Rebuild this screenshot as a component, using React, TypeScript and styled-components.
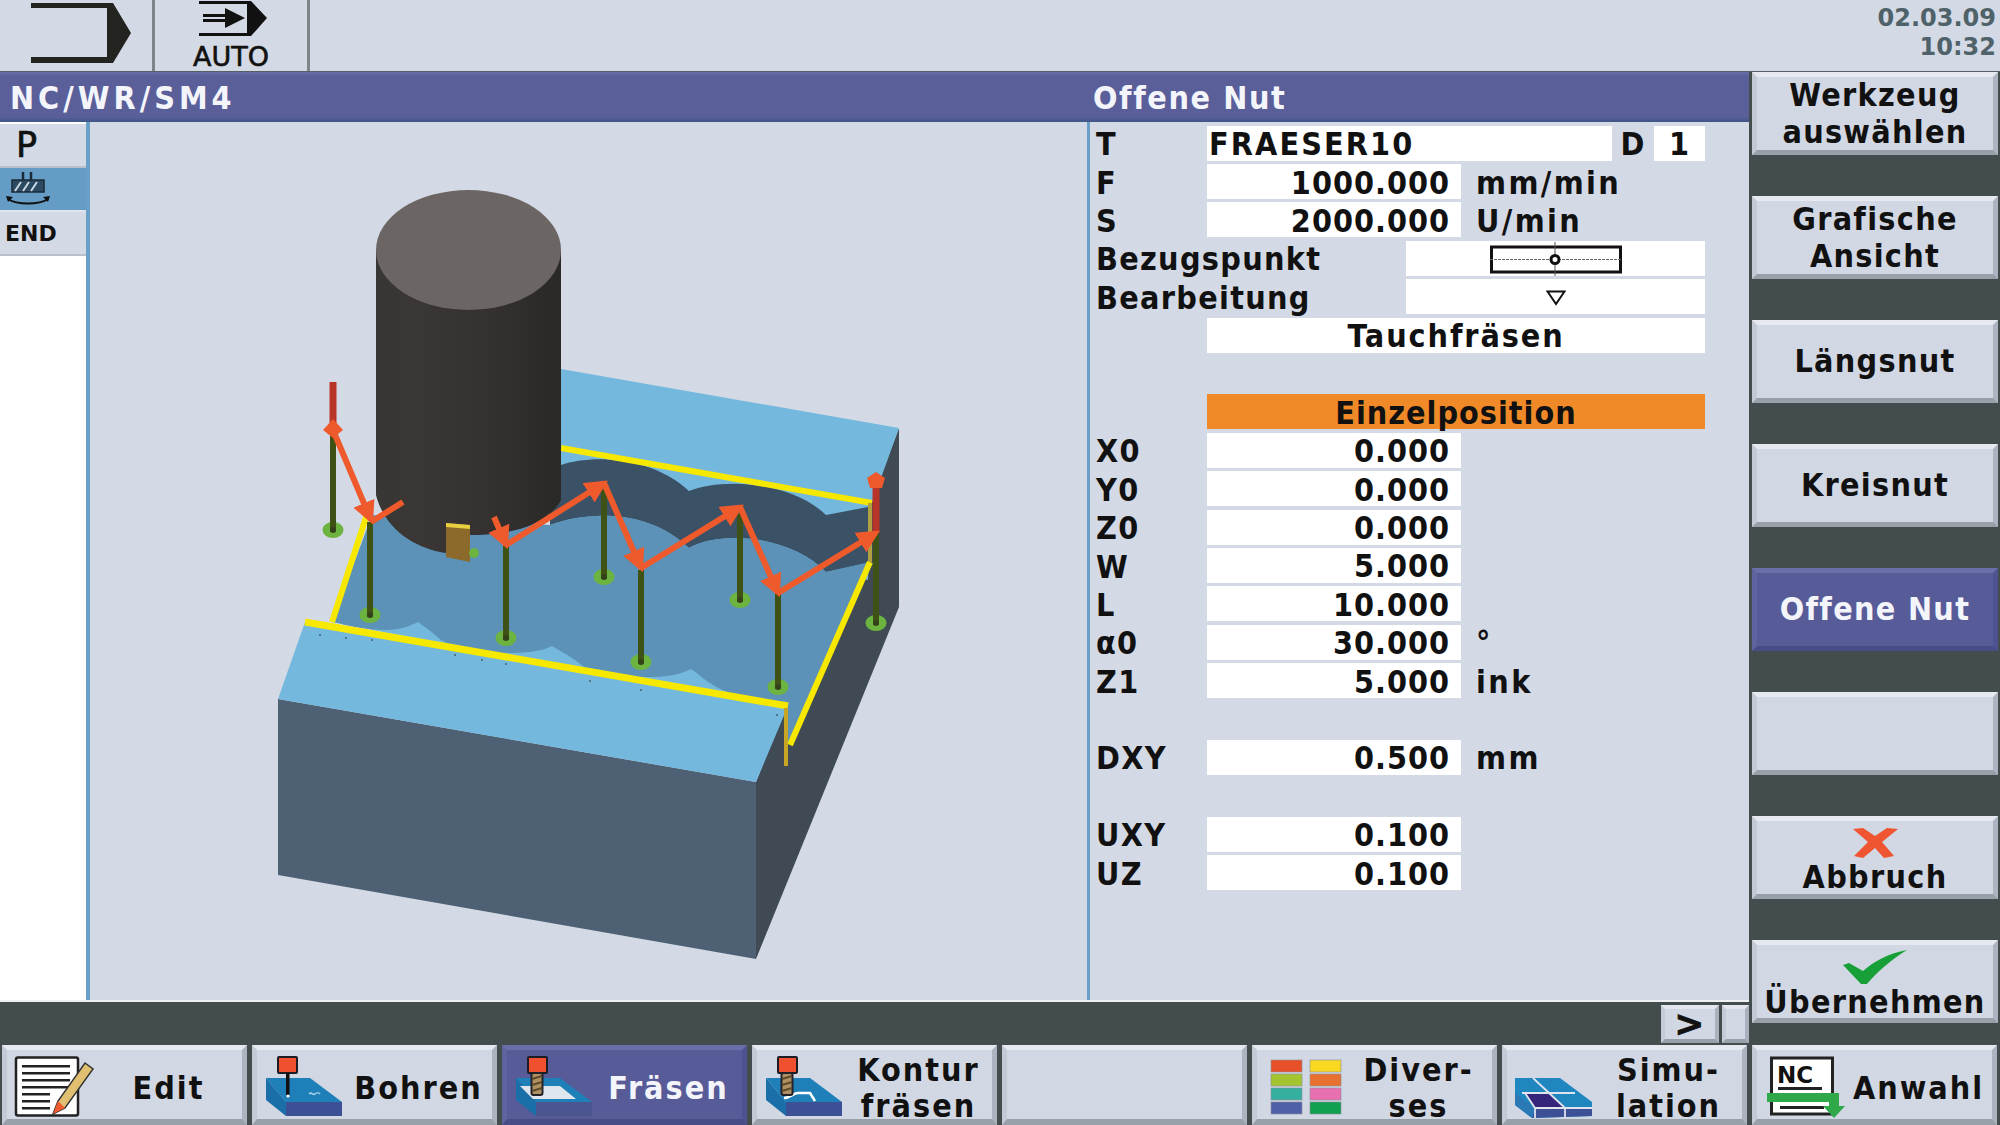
import React from "react";
import styled, { createGlobalStyle } from "styled-components";

const Global = createGlobalStyle`
  html, body { margin: 0; padding: 0; background: #d4dae5; }
  * { box-sizing: border-box; }
`;

const FONT = `"DejaVu Sans Condensed", "DejaVu Sans", "Liberation Sans", sans-serif`;
const WIDE = `"DejaVu Sans", "Liberation Sans", sans-serif`;
const DARK = "#434d4d";
const PANEL = "#d4dae5";

const Screen = styled.div`
  width: 2000px; height: 1125px; overflow: hidden;
  display: flex; flex-direction: column;
  background: ${PANEL}; color: #111;
  font-family: ${FONT}; font-weight: 700; font-size: 32px; letter-spacing: 1.3px;
`;
const TopBar = styled.header`
  height: 72px; flex: none; display: flex;
  border-bottom: 1px solid #565f63; background: ${PANEL};
`;
const TopCell = styled.div<{ $w: number }>`
  width: ${p => p.$w}px; border-right: 3px solid #7f868b;
  display: flex; flex-direction: column; align-items: center;
`;
const AutoLabel = styled.span`
  font-family: ${WIDE}; letter-spacing: 0; font-size: 27px; line-height: 26px; font-weight: 400; -webkit-text-stroke: 0.6px #111;
`;
const Clock = styled.div`
  margin-left: auto; padding: 4px 4px 0 0; text-align: right;
  font-family: ${WIDE}; letter-spacing: 0;
  color: #4f6269; font-size: 24px; line-height: 29px;
`;
const Middle = styled.div`
  flex: 1; display: flex; min-height: 0; background: ${DARK};
`;
const WorkColumn = styled.div`
  width: 1749px; display: flex; flex-direction: column;
`;
const TitleBar = styled.div`
  height: 50px; flex: none; display: flex; align-items: center; padding-top: 2px;
  color: #f4f5fa;
  background: linear-gradient(#6a6fa9 0, #5a5f9a 8%, #5a5f9a 90%, #3d5585 100%);
`;
const TitleLeft = styled.div`
  width: 1087px; padding-left: 10px; letter-spacing: 4px;
`;
const TitleRight = styled.div`
  padding-left: 6px; letter-spacing: 1.6px;
`;
const Content = styled.div`
  flex: 1; display: flex; min-height: 0; background: ${PANEL};
  border-bottom: 2px solid #eef0f4;
`;
const ProgramList = styled.nav`
  width: 90px; flex: none; background: #fff;
  border-right: 4px solid #6a9fc8; padding-top: 2px;
  display: flex; flex-direction: column;
`;
const ProgramRow = styled.div<{ $selected?: boolean; $small?: boolean }>`
  height: 44px; display: flex; align-items: center; padding-left: ${p => (p.$small ? 5 : 16)}px;
  background: ${p => (p.$selected ? "#659cc6" : PANEL)};
  border-bottom: 2px solid ${p => (p.$selected ? "#dfe4ec" : "#b9c0cb")};
  font-family: ${WIDE}; letter-spacing: 0;
  font-size: ${p => (p.$small ? 22 : 35)}px;
  font-weight: ${p => (p.$small ? 700 : 400)};
  ${p => (p.$small ? "" : "-webkit-text-stroke: 0.7px #111;")}
`;
const Graphic = styled.div`
  flex: 1; min-width: 0;
  svg { display: block; width: 997px; height: 876px; }
`;
const Form = styled.section`
  width: 662px; flex: none; border-left: 3px solid #6a9fc8;
  padding: 2px 44px 0 6px;
`;
const Row = styled.div`
  height: 38.4px; display: flex; align-items: center; white-space: nowrap;
`;
const FieldLabel = styled.span`
  width: 111px; flex: none; padding-top: 2px;
`;
const WideLabel = styled.span`
  padding-top: 2px;
`;
const Field = styled.div<{ $w?: number; $align?: string; $bg?: string; $push?: boolean; $ls?: number }>`
  height: 35px; display: flex; align-items: center;
  ${p => (p.$w ? `width:${p.$w}px;flex:none;` : "flex:1;")}
  ${p => (p.$push ? "margin-left:auto;" : "")}
  justify-content: ${p => p.$align || "flex-end"};
  background: ${p => p.$bg || "#fff"};
  letter-spacing: ${p => p.$ls ?? 1}px;
  padding: ${p => (!p.$align ? "2px 11px 0 3px" : "2px 2px 0")};
`;
const Unit = styled.span`
  margin-left: 15px; padding-top: 2px; letter-spacing: 2.4px;
`;
const DLabel = styled.span`
  width: 42px; flex: none; text-align: center; padding-top: 2px;
`;
const HintBar = styled.div`
  height: 43px; flex: none; display: flex; justify-content: flex-end;
  align-items: flex-start; gap: 3px; padding: 3px 0 0 0; background: ${DARK};
`;
const MiniKey = styled.div<{ $w: number }>`
  width: ${p => p.$w}px; height: 38px; display: flex; align-items: center; justify-content: center;
  background: #d1d7e3;
  border-style: solid; border-width: 4px;
  border-color: #e4e7ee #aab1bc #98a0aa #c6ccd7;
  font-family: ${WIDE}; font-size: 36px; line-height: 1; -webkit-text-stroke: 0.8px #111;
`;
const SideKeys = styled.aside`
  flex: 1; display: flex; flex-direction: column; gap: 41px;
  padding: 0 2px 0 3px;
`;
const SoftKey = styled.button<{ $active?: boolean }>`
  height: 83px; flex: none; width: 100%; padding: 0; margin: 0;
  font: inherit; letter-spacing: inherit; text-align: center;
  display: flex; flex-direction: column; align-items: center; justify-content: center;
  border-style: solid; border-width: 5px;
  color: ${p => (p.$active ? "#f4f5fa" : "#111")};
  background: ${p => (p.$active ? "#575c98" : "#d1d7e3")};
  border-color: ${p => (p.$active
    ? "#6a6fa9 #4d5290 #484d88 #5f64a0"
    : "#e6e9ef #adb4bf #98a0aa #c4cad5")};
`;
const SideIcon = styled.svg`
  display: block; flex: none; margin-top: 7px;
`;
const KeyText = styled.span`
  line-height: 37px; display: block; white-space: nowrap;
`;
const BottomRow = styled.footer`
  height: 80px; flex: none; display: flex; gap: 5px; padding-left: 2px; background: ${DARK};
`;
const BottomKey = styled(SoftKey)`
  width: 245px; height: 80px; flex-direction: row; justify-content: flex-start;
  padding: 5px 0 0 6px; border-bottom-width: 6px; letter-spacing: 2px;
`;
const BottomIcon = styled.svg`
  display: block; width: 82px; height: 62px; flex: none;
`;
const BottomLabel = styled.span`
  flex: 1; text-align: center; white-space: nowrap; line-height: 36px; padding-top: 1px;
`;

const Back = ({ children }: { children: React.ReactNode }) => (
  <BottomIcon viewBox="0 0 82 62">{children}</BottomIcon>
);

const IconEdit = () => (
  <Back>
    <rect x="3" y="1.5" width="62" height="58" rx="2" fill="#fff" stroke="#222" strokeWidth="2.5" />
    {[9, 16, 23, 30, 37, 44, 51].map(y => (
      <rect key={y} x="9" y={y} width={y > 36 ? 28 : 48} height="2.5" fill="#222" />
    ))}
    <polygon points="72,7 80,13 52,52 40,58 45,45" fill="#e0c070" stroke="#333" strokeWidth="1.5" />
    <polygon points="45,45 52,52 40,58" fill="#ef5a2e" />
  </Back>
);
const Tool = ({ tan }: { tan?: boolean }) => (
  <g>
    <rect x="15" y="1" width="19" height="16" rx="1" fill="#ef5030" stroke="#1c1c24" strokeWidth="2" />
    {tan
      ? (
        <g>
          <rect x="18.5" y="17" width="11" height="22" rx="2" fill="#b09060" stroke="#22222a" strokeWidth="2" />
          <path d="M19 23 L29 20 M19 29 L29 26 M19 35 L29 32" stroke="#5d4a2a" strokeWidth="2" />
        </g>
      )
      : (
        <g>
          <rect x="23" y="17" width="3.5" height="22" fill="#111" />
          <circle cx="25" cy="40" r="1.6" fill="#fff" />
        </g>
      )}
  </g>
);
const BlockSides = ({ front = "#3d5096" }: { front?: string }) => (
  <g>
    <polygon points="3,22 47,22 79,46 23,46" fill="#1f7fb8" />
    <polygon points="23,46 79,46 79,60 23,60" fill={front} />
    <polygon points="3,22 23,46 23,60 3,44" fill="#1a6fa8" />
  </g>
);
const IconDrill = () => (
  <Back>
    <BlockSides />
    <path d="M46 38 c3-3 4 2 6 0 s3-2 5 0" stroke="#a8d0ec" strokeWidth="1.6" fill="none" />
    <Tool />
  </Back>
);
const IconMill = () => (
  <Back>
    <BlockSides front="#4d5590" />
    <polygon points="7,30 47,30 63,43 20,43" fill="#dfe6ee" />
    <Tool tan />
  </Back>
);
const IconContour = () => (
  <Back>
    <BlockSides />
    <path d="M21 42 C28 42 30 37 35 37 H47 L52 45" stroke="#fff" strokeWidth="2.6" fill="none" />
    <Tool tan />
  </Back>
);
const IconVarious = () => {
  const cells = ["#e8502a", "#f8d820", "#a5c530", "#e87030", "#35b0a0", "#e870b0", "#5060a8", "#10a050"];
  return (
    <Back>
      {cells.map((c, i) => (
        <rect key={c} x={8 + (i % 2) * 39} y={4 + Math.floor(i / 2) * 14} width="31" height="12" fill={c} stroke="#8b8f99" strokeWidth=".6" />
      ))}
    </Back>
  );
};
const IconSim = () => (
  <Back>
    <polygon points="2,22 47,22 79,46 79,60 19,62 2,49" fill="#1f86c0" />
    <polygon points="22,52 79,53 79,60 19,62" fill="#3d5096" />
    <polygon points="2,37 22,52 19,62 2,49" fill="#2a78b4" />
    <polygon points="12,37 37,37 52,52 22,52" fill="#35247a" />
    <path d="M20 22 L52 52 V61 M9 37 H62 M12 37 L22 52 H79 M22 52 V62" stroke="#dfe3ee" strokeWidth="1.8" fill="none" />
  </Back>
);
const IconAnwahl = () => (
  <Back>
    <rect x="8.5" y="2" width="61" height="56" fill="#fff" stroke="#222" strokeWidth="3" />
    <text x="14" y="27" fontFamily={WIDE} fontWeight="700" fontSize="23" letterSpacing="0" fill="#111">NC</text>
    <rect x="15" y="31" width="44" height="3" fill="#222" />
    <rect x="17" y="50" width="44" height="3" fill="#222" />
    <path d="M4 37 H76 V50 H82 L71 62 L60 50 H66 V46 H4 Z" fill="#2fa84a" />
  </Back>
);

const Arrow = ({ a, b, head = true }: { a: number[]; b: number[]; head?: boolean }) => (
  <line x1={a[0]} y1={a[1]} x2={b[0]} y2={b[1]} stroke="#ee5a2c" strokeWidth="6" markerEnd={head ? "url(#head)" : undefined} />
);

const Pole = ({ x, y1, y2 }: { x: number; y1: number; y2: number }) => (
  <g>
    <ellipse cx={x} cy={y2 - 2} rx="10.5" ry="8" fill="#6db33f" />
    <rect x={x - 3} y={y1} width="6" height={y2 - y1} fill="#3f5216" />
    <circle cx={x} cy={y2 - 2} r="3" fill="#34421a" />
  </g>
);

const Workpiece = () => (
  <svg viewBox="90 122 997 876">
    <defs>
      <marker id="head" viewBox="0 0 10 10" refX="8" refY="5" markerWidth="3.8" markerHeight="3.8" orient="auto">
        <path d="M0 0 L10 5 L0 10 Z" fill="#ee5a2c" />
      </marker>
      <linearGradient id="toolBody" x1="0" x2="1" y1="0" y2="0">
        <stop offset="0" stopColor="#383734" />
        <stop offset=".25" stopColor="#3a3635" />
        <stop offset=".6" stopColor="#353130" />
        <stop offset="1" stopColor="#2a2926" />
      </linearGradient>
    </defs>
    <polygon points="899,428 899,607 756,959 756,782 786,706 870,503" fill="#3f4a54" />
    <polygon points="278,699 278,875 756,959 756,782" fill="#4e6174" />
    <polygon points="561,369 899,428 872,503 868,580 550,530 561,448" fill="#74b8de" />
    <polygon points="278,699 305,622 788,706 756,782" fill="#74b8de" />
    <polygon points="332,622 372,520 790,600 790,712" fill="#74b8de" />
    <path d="M550 470 L561 465 C590 455 650 455 689 491 C720 478 790 480 826 515 L868 507 L868 563 L826 572 C790 535 720 530 689 548 C650 510 590 510 550 525 Z" fill="#3b5165" />
    <path d="M372 515 L550 525 C590 510 650 510 689 548 C720 530 790 535 826 572 L870 562 L792 742 L786 745 L786 706 L762 700 C745 698 733 695 723 690 C710 685 700 675 691 669 C680 675 665 677 651 677 C620 677 600 675 584 667 C572 657 562 652 552 646 C540 652 525 653 508 653 C480 653 460 650 441 640 C432 632 425 627 418 622 C408 627 398 630 386 630 C370 630 352 627 338 623 L332 622 Z" fill="#5c92b8" />
    <line x1="561" y1="448" x2="872" y2="503" stroke="#f7e800" strokeWidth="6" />
    <line x1="370" y1="505" x2="332" y2="622" stroke="#f7e800" strokeWidth="6" />
    <line x1="305" y1="622" x2="788" y2="706" stroke="#f7e800" strokeWidth="7" />
    <line x1="870" y1="562" x2="790" y2="745" stroke="#f7e800" strokeWidth="6" />
    <line x1="786" y1="708" x2="786" y2="766" stroke="#c9a524" strokeWidth="4" />
    <line x1="870" y1="503" x2="870" y2="562" stroke="#b0a040" strokeWidth="4" />
    {[[320, 635], [346, 638], [372, 640], [455, 655], [482, 660], [506, 664], [590, 681], [641, 690], [777, 715]].map(([x, y]) => (
      <circle key={x} cx={x} cy={y} r="1" fill="#44606f" />
    ))}

    <Pole x={604} y1={488} y2={579} />
    <Pole x={740} y1={513} y2={602} />
    <Pole x={333} y1={430} y2={532} />
    <Pole x={370} y1={522} y2={617} />
    <Pole x={506} y1={545} y2={640} />
    <Pole x={641} y1={570} y2={664} />
    <Pole x={778} y1={593} y2={689} />
    <Pole x={876} y1={533} y2={625} />

    <path d="M376 250 V495 C385 530 415 548 445 553 L470 535 C500 535 545 530 561 500 V250 Z" fill="url(#toolBody)" />
    <ellipse cx="468.5" cy="250" rx="92.5" ry="60" fill="#6b6664" />
    <polygon points="446,523 470,525 470,562 446,557" fill="#8b6a2b" />
    <polygon points="446,523 470,525 470,529 446,527" fill="#e8d040" />
    <circle cx="474" cy="553" r="5" fill="#6db33f" />

    <rect x="329.5" y="382" width="7" height="47" fill="#b83428" />
    <rect x="872.5" y="478" width="7" height="55" fill="#b83428" />
    <polygon points="333,419 343,430 333,438 323,430" fill="#ee5a2c" />
    <polygon points="876,472 885,478 882,488 870,488 867,478" fill="#ee5a2c" />
    <Arrow a={[333, 430]} b={[371, 520]} />
    <Arrow a={[403, 502]} b={[371, 522]} head={false} />
    <Arrow a={[494, 517]} b={[506, 545]} />
    <Arrow a={[506, 545]} b={[604, 483]} />
    <Arrow a={[604, 483]} b={[641, 568]} />
    <Arrow a={[641, 568]} b={[740, 507]} />
    <Arrow a={[740, 507]} b={[778, 593]} />
    <Arrow a={[778, 593]} b={[876, 533]} />
  </svg>
);

const values: [string, string, string?][] = [
  ["X0", "0.000"], ["Y0", "0.000"], ["Z0", "0.000"], ["W", "5.000"], ["L", "10.000"],
  ["α0", "30.000", "°"], ["Z1", "5.000", "ink"],
];

const ValueRow = ({ label, value, unit }: { label: string; value: string; unit?: string }) => (
  <Row>
    <FieldLabel>{label}</FieldLabel>
    <Field $w={254}>{value}</Field>
    {unit && <Unit>{unit}</Unit>}
  </Row>
);

const sideKeys: { lines: string[]; active?: boolean; icon?: React.ReactNode }[] = [
  { lines: ["Werkzeug", "auswählen"] },
  { lines: ["Grafische", "Ansicht"] },
  { lines: ["Längsnut"] },
  { lines: ["Kreisnut"] },
  { lines: ["Offene Nut"], active: true },
  { lines: [] },
  {
    lines: ["Abbruch"],
    icon: (
      <SideIcon width="48" height="32" viewBox="0 0 48 32">
        <path d="M2 2 L12 1 L24 9 L36 1 L47 2 L31 15 L43 29 L33 31 L24 21 L12 31 L3 29 L17 15 Z" fill="#ef5530" />
      </SideIcon>
    ),
  },
  {
    lines: ["Übernehmen"],
    icon: (
      <SideIcon width="64" height="34" viewBox="0 0 64 34">
        <path d="M0 15 L6 13 L20 21 C30 12 46 3 64 0 C48 10 34 22 24 34 L18 34 Z" fill="#18a038" />
      </SideIcon>
    ),
  },
];

export default function App() {
  return (
    <Screen>
      <Global />
      <TopBar>
        <TopCell $w={155}>
          <svg width="152" height="71" viewBox="0 0 152 71">
            <path d="M31 3 H113 L131 33 L113 63 H31 V57 H107 V8 H31 Z" fill="#23241f" />
          </svg>
        </TopCell>
        <TopCell $w={155}>
          <svg width="152" height="44" viewBox="0 0 152 44" style={{ flex: "none" }}>
            <path d="M44 1 H96 L112 18 L96 36 H44 V33 H92 V4 H44 Z" fill="#111" />
            <path d="M48 14 H70 V8 L90 18 L70 28 V22 H48 V19 H70 V17 H48 Z" fill="#111" />
          </svg>
          <AutoLabel>AUTO</AutoLabel>
        </TopCell>
        <Clock>02.03.09<br />10:32</Clock>
      </TopBar>
      <Middle>
        <WorkColumn>
          <TitleBar>
            <TitleLeft>NC/WR/SM4</TitleLeft>
            <TitleRight>Offene Nut</TitleRight>
          </TitleBar>
          <Content>
            <ProgramList>
              <ProgramRow>P</ProgramRow>
              <ProgramRow $selected $small>
                <svg width="46" height="34" viewBox="0 0 46 34">
                  <path d="M18 0 V8 M26 0 V8" stroke="#1c2a38" strokeWidth="2.5" />
                  <rect x="7" y="8" width="32" height="12" fill="#2c4a62" stroke="#1c2a38" strokeWidth="1.5" />
                  <path d="M10 19 L16 10 M18 19 L24 10 M26 19 L32 10" stroke="#c8d8e4" strokeWidth="2" />
                  <path d="M3 27 C12 33 34 33 43 27" stroke="#111" strokeWidth="2" fill="none" />
                  <path d="M1 24 L8 25 L3 30 Z M45 24 L38 25 L43 30 Z" fill="#111" />
                </svg>
              </ProgramRow>
              <ProgramRow $small>END</ProgramRow>
            </ProgramList>
            <Graphic><Workpiece /></Graphic>
            <Form>
              <Row>
                <FieldLabel>T</FieldLabel>
                <Field $w={405} $align="flex-start" $ls={2.1}>FRAESER10</Field>
                <DLabel>D</DLabel>
                <Field $align="center">1</Field>
              </Row>
              <ValueRow label="F" value="1000.000" unit="mm/min" />
              <ValueRow label="S" value="2000.000" unit="U/min" />
              <Row>
                <WideLabel>Bezugspunkt</WideLabel>
                <Field $w={299} $push $align="center">
                  <svg width="132" height="34" viewBox="0 0 132 34">
                    <rect x="1.5" y="5" width="129" height="25" fill="#fff" stroke="#111" strokeWidth="3" />
                    <path d="M0 17.5 H132" stroke="#666" strokeWidth="1" strokeDasharray="3 1" />
                    <path d="M65 0 V34" stroke="#555" strokeWidth="1" />
                    <circle cx="65" cy="17.5" r="4" fill="#fff" stroke="#111" strokeWidth="3" />
                  </svg>
                </Field>
              </Row>
              <Row>
                <WideLabel>Bearbeitung</WideLabel>
                <Field $w={299} $push $align="center">
                  <svg width="20" height="16" viewBox="0 0 20 16">
                    <path d="M1.5 1.5 H18.5 L10 14 Z" fill="none" stroke="#111" strokeWidth="2" />
                  </svg>
                </Field>
              </Row>
              <Row>
                <FieldLabel />
                <Field $align="center" $ls={1.9}>Tauchfräsen</Field>
              </Row>
              <Row />
              <Row>
                <FieldLabel />
                <Field $align="center" $bg="#f08a28">Einzelposition</Field>
              </Row>
              {values.map(([l, v, u]) => <ValueRow key={l} label={l} value={v} unit={u} />)}
              <Row />
              <ValueRow label="DXY" value="0.500" unit="mm" />
              <Row />
              <ValueRow label="UXY" value="0.100" />
              <ValueRow label="UZ" value="0.100" />
            </Form>
          </Content>
          <HintBar>
            <MiniKey $w={58}>&gt;</MiniKey>
            <MiniKey $w={27} />
          </HintBar>
        </WorkColumn>
        <SideKeys>
          {sideKeys.map((k, i) => (
            <SoftKey key={i} $active={k.active}>
              {k.icon}
              {k.lines.map(l => <KeyText key={l}>{l}</KeyText>)}
            </SoftKey>
          ))}
        </SideKeys>
      </Middle>
      <BottomRow>
        <BottomKey><IconEdit /><BottomLabel>Edit</BottomLabel></BottomKey>
        <BottomKey><IconDrill /><BottomLabel>Bohren</BottomLabel></BottomKey>
        <BottomKey $active><IconMill /><BottomLabel>Fräsen</BottomLabel></BottomKey>
        <BottomKey><IconContour /><BottomLabel>Kontur<br />fräsen</BottomLabel></BottomKey>
        <BottomKey />
        <BottomKey><IconVarious /><BottomLabel>Diver-<br />ses</BottomLabel></BottomKey>
        <BottomKey><IconSim /><BottomLabel>Simu-<br />lation</BottomLabel></BottomKey>
        <BottomKey><IconAnwahl /><BottomLabel>Anwahl</BottomLabel></BottomKey>
      </BottomRow>
    </Screen>
  );
}
